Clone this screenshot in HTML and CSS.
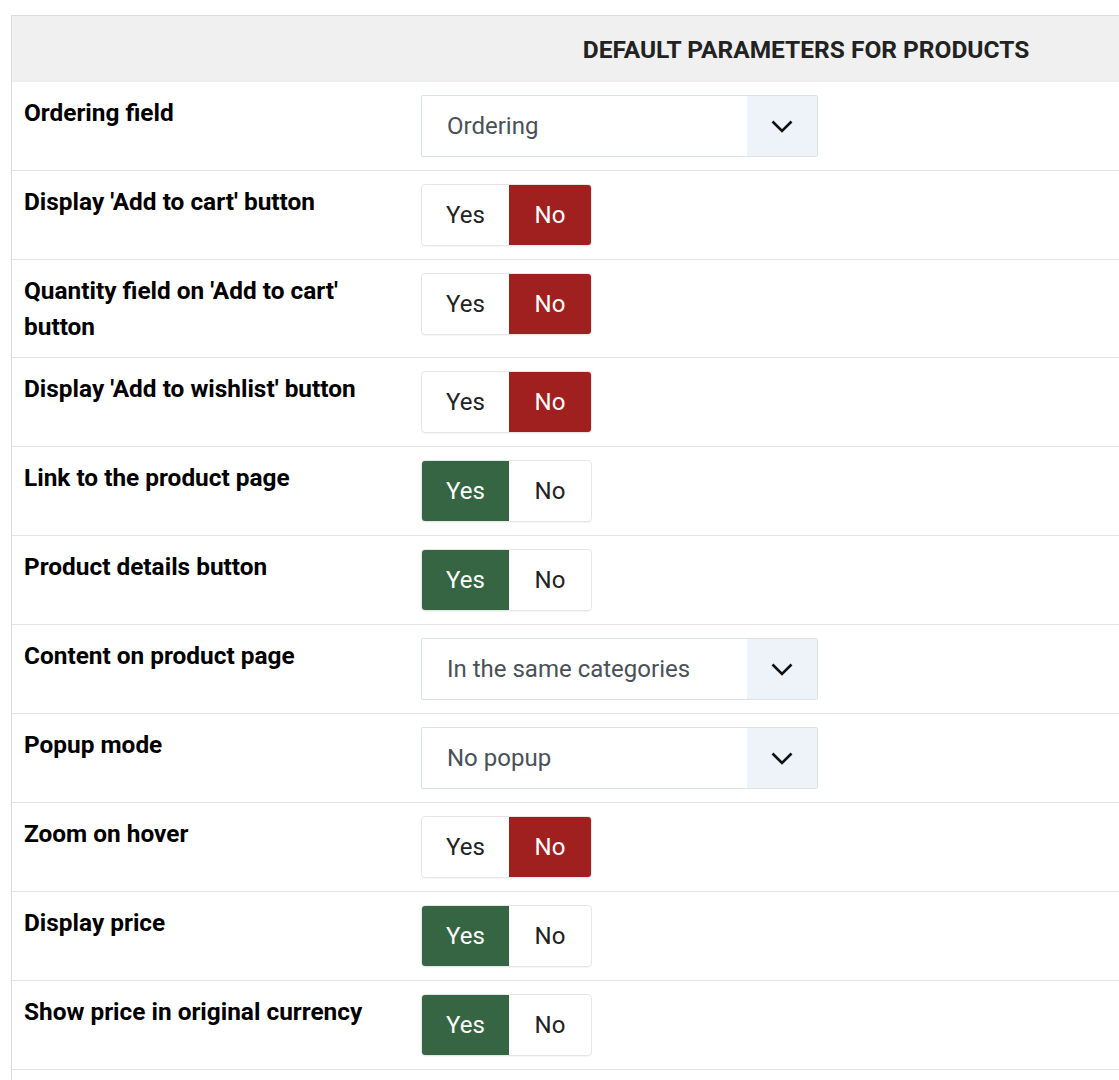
FILE: index.html
```html
<!DOCTYPE html>
<html lang="en">
<head>
<meta charset="utf-8">
<title>Default parameters for products</title>
<link rel="stylesheet" href="styles.css">
</head>
<body>
<div class="panel">
  <div class="panel-head">
    <h2 class="head-title">DEFAULT PARAMETERS FOR PRODUCTS</h2>
  </div>

  <div class="row">
    <div class="label">Ordering field</div>
    <div class="field">
      <div class="select"><span class="select-value">Ordering</span><span class="select-arrow"><svg width="22" height="13" viewBox="0 0 22 13"><path d="M1.5 1.5 L11 11 L20.5 1.5" fill="none" stroke="#111" stroke-width="2.6"/></svg></span></div>
    </div>
  </div>

  <div class="row">
    <div class="label">Display 'Add to cart' button</div>
    <div class="field"><div class="toggle"><span class="opt">Yes</span><span class="opt opt-no on-no">No</span></div></div>
  </div>

  <div class="row">
    <div class="label">Quantity field on 'Add to cart' button</div>
    <div class="field"><div class="toggle"><span class="opt">Yes</span><span class="opt opt-no on-no">No</span></div></div>
  </div>

  <div class="row">
    <div class="label">Display 'Add to wishlist' button</div>
    <div class="field"><div class="toggle"><span class="opt">Yes</span><span class="opt opt-no on-no">No</span></div></div>
  </div>

  <div class="row">
    <div class="label">Link to the product page</div>
    <div class="field"><div class="toggle"><span class="opt on-yes">Yes</span><span class="opt opt-no">No</span></div></div>
  </div>

  <div class="row">
    <div class="label">Product details button</div>
    <div class="field"><div class="toggle"><span class="opt on-yes">Yes</span><span class="opt opt-no">No</span></div></div>
  </div>

  <div class="row">
    <div class="label">Content on product page</div>
    <div class="field">
      <div class="select"><span class="select-value">In the same categories</span><span class="select-arrow"><svg width="22" height="13" viewBox="0 0 22 13"><path d="M1.5 1.5 L11 11 L20.5 1.5" fill="none" stroke="#111" stroke-width="2.6"/></svg></span></div>
    </div>
  </div>

  <div class="row">
    <div class="label">Popup mode</div>
    <div class="field">
      <div class="select"><span class="select-value">No popup</span><span class="select-arrow"><svg width="22" height="13" viewBox="0 0 22 13"><path d="M1.5 1.5 L11 11 L20.5 1.5" fill="none" stroke="#111" stroke-width="2.6"/></svg></span></div>
    </div>
  </div>

  <div class="row">
    <div class="label">Zoom on hover</div>
    <div class="field"><div class="toggle"><span class="opt">Yes</span><span class="opt opt-no on-no">No</span></div></div>
  </div>

  <div class="row">
    <div class="label">Display price</div>
    <div class="field"><div class="toggle"><span class="opt on-yes">Yes</span><span class="opt opt-no">No</span></div></div>
  </div>

  <div class="row">
    <div class="label">Show price in original currency</div>
    <div class="field"><div class="toggle"><span class="opt on-yes">Yes</span><span class="opt opt-no">No</span></div></div>
  </div>

  <div class="row row-tail"></div>
</div>
</body>
</html>
```

FILE: styles.css
```css
html, body {
  margin: 0;
  padding: 0;
  background: #ffffff;
  overflow: hidden;
}

body {
  font-family: Roboto, "Liberation Sans", Arial, sans-serif;
  color: #000;
}

.panel {
  margin: 15px 0 0 11px;
  width: 1588px;
  border-left: 1px solid #dcdcdc;
  border-top: 1px solid #dcdcdc;
}

.panel-head {
  background: #f0f0f0;
  height: 66px;
  display: flex;
  align-items: center;
  justify-content: center;
}

.head-title {
  margin: 0;
  font-size: 24.5px;
  font-weight: 700;
  color: #222;
}

.row {
  display: grid;
  grid-template-columns: 397px 1fr;
  border-bottom: 1px solid #e4e4e4;
}

.label {
  padding: 13px 12px;
  font-size: 24.4px;
  font-weight: 700;
  line-height: 35.5px;
  color: #000;
}

.field {
  padding: 13px 12px;
}

.select {
  display: flex;
  width: 397px;
  height: 62px;
  box-sizing: border-box;
  border: 1px solid #dde2e8;
  border-radius: 2px;
  background: #fff;
}

.select-value {
  flex: 1;
  display: flex;
  align-items: center;
  padding-left: 25px;
  font-size: 24px;
  color: #4a5058;
}

.select-arrow {
  width: 70px;
  display: flex;
  align-items: center;
  justify-content: center;
  background: #eef3fa;
}

.toggle {
  display: inline-flex;
  height: 62px;
  box-sizing: border-box;
  border: 1px solid #e6e6e6;
  border-radius: 4px;
  overflow: hidden;
  box-shadow: 0 1px 1px rgba(0, 0, 0, 0.04);
}

.opt {
  display: flex;
  align-items: center;
  justify-content: center;
  width: 87px;
  font-size: 24px;
  color: #222;
}

.opt-no {
  width: 82px;
}

.on-no {
  background: #a02020;
  color: #fff;
}

.on-yes {
  background: #366544;
  color: #fff;
}

.row-tail {
  height: 40px;
  border-bottom: none;
}
```
